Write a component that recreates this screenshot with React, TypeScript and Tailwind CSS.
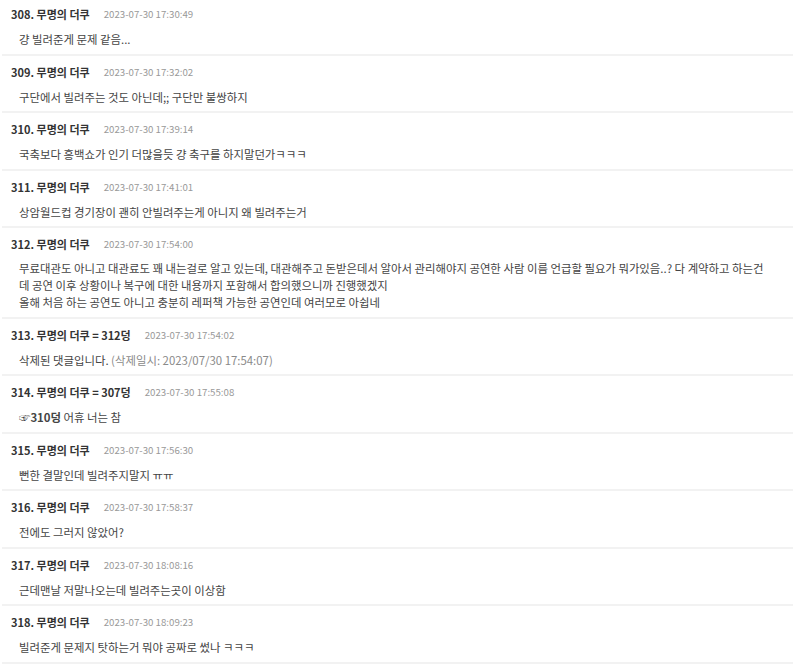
import React from "react";

type Comment = {
  no: number;
  reply?: string;
  date: string;
  lines: React.ReactNode[];
};

const comments: Comment[] = [
  { no: 308, date: "2023-07-30 17:30:49", lines: ["걍 빌려준게 문제 같음..."] },
  { no: 309, date: "2023-07-30 17:32:02", lines: ["구단에서 빌려주는 것도 아닌데;; 구단만 불쌍하지"] },
  { no: 310, date: "2023-07-30 17:39:14", lines: ["국축보다 흥백쇼가 인기 더많을듯 걍 축구를 하지말던가ㅋㅋㅋ"] },
  { no: 311, date: "2023-07-30 17:41:01", lines: ["상암월드컵 경기장이 괜히 안빌려주는게 아니지 왜 빌려주는거"] },
  {
    no: 312,
    date: "2023-07-30 17:54:00",
    lines: [
      "무료대관도 아니고 대관료도 꽤 내는걸로 알고 있는데, 대관해주고 돈받은데서 알아서 관리해야지 공연한 사람 이름 언급할 필요가 뭐가있음..? 다 계약하고 하는건",
      "데 공연 이후 상황이나 복구에 대한 내용까지 포함해서 합의했으니까 진행했겠지",
      "올해 처음 하는 공연도 아니고 충분히 레퍼책 가능한 공연인데 여러모로 아쉽네",
    ],
  },
  {
    no: 313,
    reply: "312덩",
    date: "2023-07-30 17:54:02",
    lines: [
      <>
        삭제된 댓글입니다. <span className="text-[#8a8a8a]">(삭제일시: 2023/07/30 17:54:07)</span>
      </>,
    ],
  },
  {
    no: 314,
    reply: "307덩",
    date: "2023-07-30 17:55:08",
    lines: [
      <>
        <span className="font-bold">☞310덩</span> 어휴 너는 참
      </>,
    ],
  },
  { no: 315, date: "2023-07-30 17:56:30", lines: ["뻔한 결말인데 빌려주지말지 ㅠㅠ"] },
  { no: 316, date: "2023-07-30 17:58:37", lines: ["전에도 그러지 않았어?"] },
  { no: 317, date: "2023-07-30 18:08:16", lines: ["근데맨날 저말나오는데 빌려주는곳이 이상함"] },
  { no: 318, date: "2023-07-30 18:09:23", lines: ["빌려준게 문제지 탓하는거 뭐야 공짜로 썼나 ㅋㅋㅋ"] },
];

export default function App() {
  return (
    <div className="w-[800px] h-[666px] overflow-hidden bg-white font-['Noto_Sans_CJK_KR','Noto_Sans',sans-serif]">
      <ul className="ml-[2px] w-[791px]">
        {comments.map((c, i) => (
          <li
            key={c.no}
            className={`${i === 0 ? "pt-[5px]" : "pt-[7px]"} pb-[5.5px] px-[9px] border-b-2 border-[#f2f2f2]`}
          >
            <div className="flex items-center h-[18px] leading-[18px]">
              <span className="text-[11px] font-bold text-[#333]">
                {c.no}. 무명의 더쿠{c.reply && <> = {c.reply}</>}
              </span>
              <span className="ml-[14px] text-[9.7px] text-[#999]">{c.date}</span>
            </div>
            <div
              className={`mt-[7px] pl-[8px] text-[11.4px] ${
                c.lines.length > 1 ? "leading-[17px]" : "leading-[18px]"
              } text-[#444] whitespace-nowrap`}
            >
              {c.lines.map((l, j) => (
                <div key={j}>{l}</div>
              ))}
            </div>
          </li>
        ))}
      </ul>
    </div>
  );
}
